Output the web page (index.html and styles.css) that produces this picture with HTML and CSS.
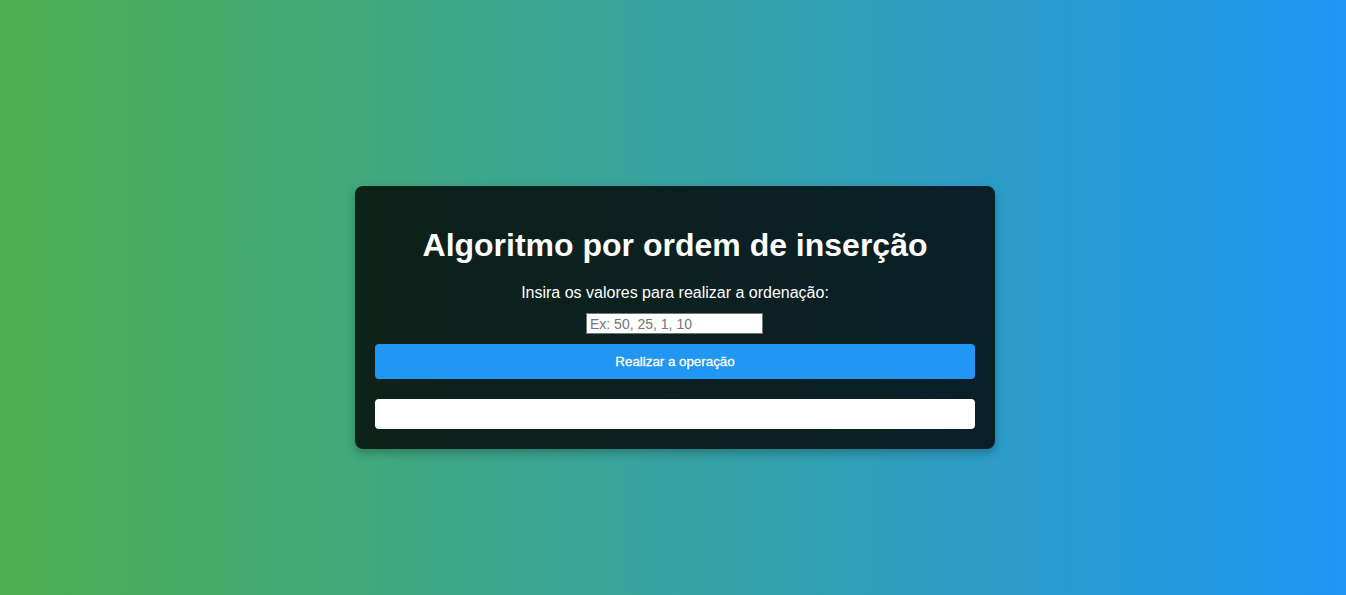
FILE: index.html
```html
<!DOCTYPE html>
<html lang="pt-BR">
<head>
<meta charset="UTF-8">
<title>Algoritmo por ordem de inserção</title>
<link rel="stylesheet" href="styles.css">
</head>
<body>
<main class="card">
  <h1 class="title">Algoritmo por ordem de inserção</h1>
  <label class="label" for="valores">Insira os valores para realizar a ordenação:</label>
  <input class="input" id="valores" type="text" placeholder="Ex: 50, 25, 1, 10">
  <button class="btn" type="button">Realizar a operação</button>
  <div class="result"></div>
</main>
</body>
</html>
```
FILE: styles.css
```css
html, body {
  margin: 0;
  height: 100%;
}
body {
  font-family: "Liberation Sans", Arial, sans-serif;
  background: linear-gradient(to right, #4CAF50, #2196F3);
  display: flex;
  justify-content: center;
  align-items: center;
  min-height: 100vh;
  color: #fff;
}
.card {
  box-sizing: border-box;
  width: 640px;
  margin: 40px 0 0 4px;
  padding: 20px;
  background: rgba(0, 0, 0, 0.8);
  border-radius: 8px;
  box-shadow: 0 4px 10px rgba(0, 0, 0, 0.25);
  display: flex;
  flex-direction: column;
  align-items: center;
}
.title {
  margin: 21px 0 20px;
  font-size: 32px;
  line-height: 37px;
  font-weight: bold;
  text-align: center;
}
.label {
  display: block;
  font-size: 16px;
  line-height: 18px;
  margin-bottom: 11px;
}
.input {
  box-sizing: border-box;
  width: 177px;
  height: 21px;
  margin: 0 0 0 -1px;
  padding: 1px 3px;
  border: 1px solid #767676;
  border-radius: 0;
  font-family: "Liberation Sans", Arial, sans-serif;
  font-size: 14px;
  color: #000;
  background: #fff;
}
.input::placeholder {
  color: #757575;
}
.btn {
  box-sizing: border-box;
  width: 100%;
  height: 35px;
  margin-top: 10px;
  border: 0;
  border-radius: 4px;
  background: #2196F3;
  color: #fff;
  font-family: "Liberation Sans", Arial, sans-serif;
  font-size: 13.333px;
  font-weight: normal;
  -webkit-text-stroke: 0.3px #fff;
  cursor: pointer;
}
.result {
  width: 100%;
  height: 30px;
  margin-top: 20px;
  background: #fff;
  border-radius: 4px;
}
```
